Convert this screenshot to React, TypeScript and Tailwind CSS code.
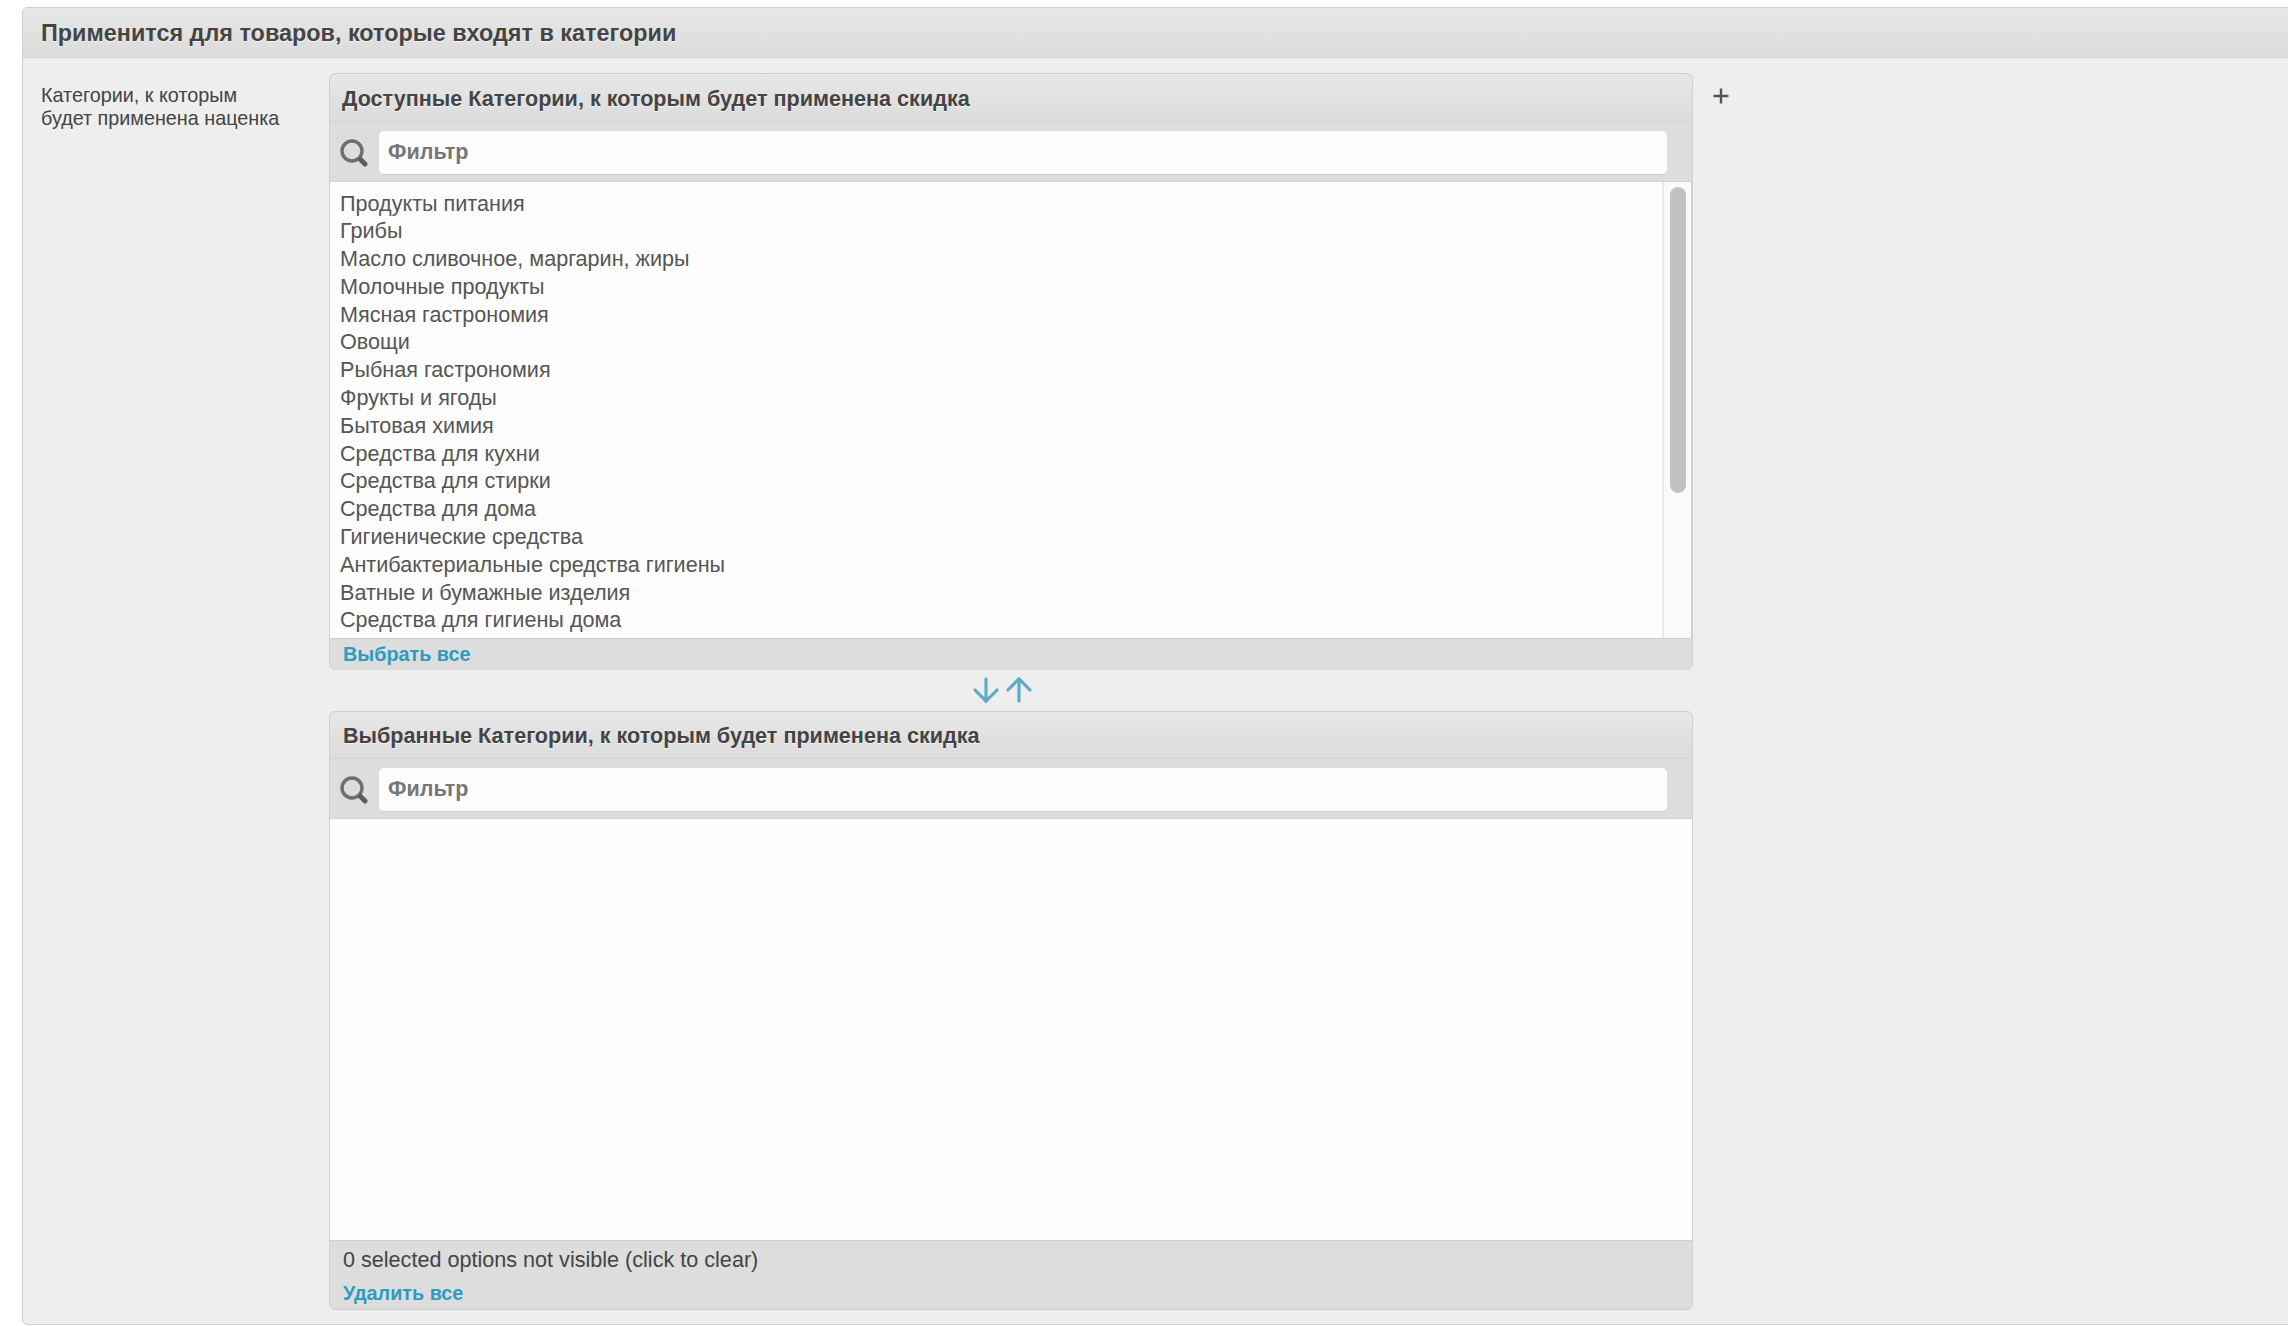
import { ArrowDown, ArrowUp } from "lucide-react";

const categories = [
  "Продукты питания",
  "Грибы",
  "Масло сливочное, маргарин, жиры",
  "Молочные продукты",
  "Мясная гастрономия",
  "Овощи",
  "Рыбная гастрономия",
  "Фрукты и ягоды",
  "Бытовая химия",
  "Средства для кухни",
  "Средства для стирки",
  "Средства для дома",
  "Гигиенические средства",
  "Антибактериальные средства гигиены",
  "Ватные и бумажные изделия",
  "Средства для гигиены дома",
];

function SearchIcon() {
  return (
    <svg width="28" height="28" viewBox="0 0 28 28" fill="none" className="shrink-0">
      <circle cx="12" cy="12" r="10" stroke="#6e6e6e" strokeWidth="3.4" />
      <path d="M20.5 20.5l4.5 4.5" stroke="#5c5c5c" strokeWidth="5" strokeLinecap="round" />
    </svg>
  );
}

function PanelHead({ title, height, inset }: { title: string; height: string; inset: string }) {
  return (
    <>
      <div
        className={`${height} ${inset} flex shrink-0 items-center rounded-t-[6px] border-b border-[#d4d4d4] bg-gradient-to-b from-[#e7e7e7] to-[#dcdcdc] text-[21.6px] font-bold text-[#444] [text-shadow:0_1px_0_#f4f4f4]`}
      >
        {title}
      </div>
      <div className="flex h-[60px] shrink-0 items-center gap-[11px] border-b border-[#d2d2d2] bg-[#dddddd] pt-[3px] pr-[25px] pl-[10px]">
        <SearchIcon />
        <div className="flex h-[44px] flex-1 items-center rounded-[5px] border-b border-[#cfcfcf] bg-[#fdfdfd] pl-[9px] text-[21.6px] font-bold text-[#777]">
          Фильтр
        </div>
      </div>
    </>
  );
}

export default function App() {
  return (
    <div className="h-[1326px] w-[2288px] overflow-hidden bg-white font-['Liberation_Sans',Arial,sans-serif]">
      <div className="mt-[7px] mr-[-12px] ml-[22px] h-[1318px] rounded-[5px] border border-[#cfcfcf] bg-[#eeeeee]">
        <div className="flex h-[50px] items-center rounded-t-[5px] border-b border-[#d6d6d6] bg-gradient-to-b from-[#e7e7e7] to-[#dcdcdc] pt-[2px] pl-[18px] text-[23.4px] font-bold text-[#444] [text-shadow:0_1px_0_#f4f4f4]">
          Применится для товаров, которые входят в категории
        </div>
        <div className="flex pt-[15px]">
          <div className="w-[306px] shrink-0 pt-[11px] pl-[18px] text-[19.8px] leading-[23px] text-[#444]">
            Категории, к которым
            <br />
            будет применена наценка
          </div>
          <div className="w-[1364px] shrink-0">
            <div className="flex h-[597px] flex-col rounded-[6px] border border-[#cfcfcf] bg-[#dddddd]">
              <PanelHead title="Доступные Категории, к которым будет применена скидка" height="h-[48px] pt-[3px]" inset="pl-[12px]" />
              <div className="-mr-px flex h-[456px] shrink-0 border-r-2 border-[#cfcfcf] bg-[#fdfdfd]">
                <div className="h-full flex-1 overflow-hidden pt-[7.5px] pl-[10px] text-[21.6px] text-[#555]">
                  {categories.map((c) => (
                    <div key={c} className="h-[27.8px] leading-[27.8px]">
                      {c}
                    </div>
                  ))}
                </div>
                <div className="w-[29px] shrink-0 border-l-2 border-[#eaeaea] bg-[#fafafa] pt-[5px] pl-[6px]">
                  <div className="h-[306px] w-[16px] rounded-[8px] bg-[#c2c2c2]" />
                </div>
              </div>
              <div className="flex flex-1 items-center rounded-b-[6px] border-t border-[#cfcfcf] bg-[#dddddd] pt-[1px] pl-[13px] text-[19.8px] font-bold text-[#2e9cbf]">
                Выбрать все
              </div>
            </div>
            <div className="flex h-[41px] items-center justify-center pr-[17px] pb-[2px] text-[#5bacc8]">
              <ArrowDown size={38} strokeWidth={2} />
              <ArrowUp size={38} strokeWidth={2} className="-ml-[5px]" />
            </div>
            <div className="flex h-[599px] flex-col rounded-[6px] border border-[#cfcfcf] bg-[#dddddd]">
              <PanelHead title="Выбранные Категории, к которым будет применена скидка" height="h-[47px] pt-[2px]" inset="pl-[13px]" />
              <div className="h-[421px] shrink-0 bg-[#fdfdfd]" />
              <div className="flex flex-1 flex-col rounded-b-[6px] border-t border-[#cfcfcf] pt-[6px] pl-[13px]">
                <div className="text-[21.6px] leading-[26px] text-[#444]">0 selected options not visible (click to clear)</div>
                <div className="mt-[7px] text-[19.8px] leading-[26px] font-bold text-[#2e9cbf]">Удалить все</div>
              </div>
            </div>
          </div>
          <div className="pt-[14px] pl-[19px]">
            <svg width="18" height="18" viewBox="0 0 18 18" className="text-[#555]">
              <path d="M9 1.5v15M1.5 9h15" stroke="currentColor" strokeWidth="2.4" />
            </svg>
          </div>
        </div>
      </div>
    </div>
  );
}
